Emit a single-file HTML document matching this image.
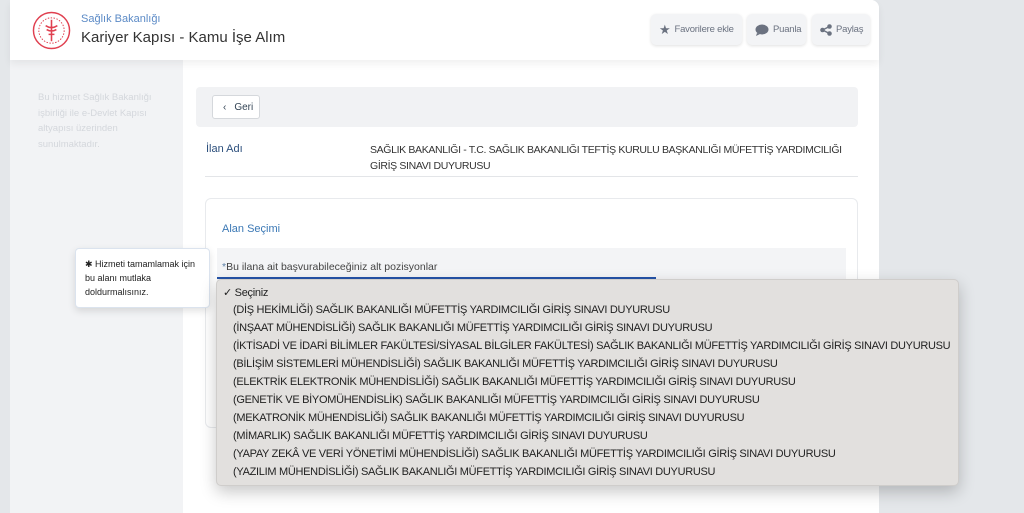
<!DOCTYPE html>
<html><head><meta charset="utf-8"><style>
*{margin:0;padding:0;box-sizing:border-box}
body{width:1024px;height:513px;overflow:hidden;background:#e4e7ea;font-family:"Liberation Sans",sans-serif;position:relative}
.abs{position:absolute}
.main{left:10px;top:0;width:869px;height:513px;background:#fff;border-radius:0 8px 0 0}
.hdr{left:10px;top:0;width:869px;height:60px;background:#fff;box-shadow:0 4px 8px rgba(0,0,0,.06);border-radius:0 8px 0 0}
.side{left:10px;top:60px;width:173px;height:453px;background:#f2f3f5}
.btn{top:14px;height:31px;background:#f3f4f6;border-radius:5px;box-shadow:0 1px 3px rgba(0,0,0,.12);font-size:9.5px;letter-spacing:-.2px;color:#6b7280;display:flex;align-items:center;padding-left:8px;gap:4px;white-space:nowrap}
.opt{left:233px;font-size:11px;letter-spacing:-.3px;color:#222;white-space:nowrap}
</style></head><body>
<div class="abs main"></div>
<div class="abs side"></div>
<div class="abs hdr"></div>
<svg class="abs" style="left:32px;top:11px" width="39" height="39" viewBox="0 0 40 40"><circle cx="20" cy="20" r="18.5" fill="none" stroke="#e04050" stroke-width="1.5"/><circle cx="20" cy="20" r="13" fill="none" stroke="#e04050" stroke-width="1" stroke-dasharray="1.5 1.5"/><path d="M20 9v22M14 15q6 4 12 0M15 19q5 3 10 0M17 24h6" stroke="#e04050" stroke-width="1.6" fill="none"/></svg>
<div class="abs" style="left:81px;top:13px;font-size:11px;color:#5b8ac6">Sağlık Bakanlığı</div>
<div class="abs" style="left:81px;top:29px;font-size:15px;color:#333">Kariyer Kapısı - Kamu İşe Alım</div>
<div class="abs btn" style="left:651px;width:91px"><span style="font-size:13px;color:#6b7280">★</span>Favorilere ekle</div>
<div class="abs btn" style="left:747px;width:59px"><svg width="14" height="12" viewBox="0 0 14 12"><ellipse cx="7" cy="5.5" rx="6.5" ry="5" fill="#6b7280"/><path d="M2 9l-1 3 4-2z" fill="#6b7280"/></svg>Puanla</div>
<div class="abs btn" style="left:812px;width:58px"><svg width="12" height="12" viewBox="0 0 12 12"><circle cx="2.5" cy="6" r="2.3" fill="#6b7280"/><circle cx="9.5" cy="2.5" r="2.3" fill="#6b7280"/><circle cx="9.5" cy="9.5" r="2.3" fill="#6b7280"/><path d="M2.5 6L9.5 2.5M2.5 6l7 3.5" stroke="#6b7280" stroke-width="1.3"/></svg>Paylaş</div>
<div class="abs" style="left:38px;top:90px;width:120px;font-size:9.5px;line-height:15.5px;color:#d4d7dc">Bu hizmet Sağlık Bakanlığı işbirliği ile e-Devlet Kapısı altyapısı üzerinden sunulmaktadır.</div>
<div class="abs" style="left:196px;top:87px;width:662px;height:40px;background:#f1f2f4;border-radius:4px"></div>
<div class="abs" style="left:212px;top:95px;width:48px;height:24px;background:#fff;border:1px solid #d5d8dc;border-radius:3px;font-size:10px;color:#345;display:flex;align-items:center;padding-left:10px;gap:8px"><span style="font-size:10px">‹</span>Geri</div>
<div class="abs" style="left:206px;top:143px;font-size:11px;color:#2c4f7c">İlan Adı</div>
<div class="abs" style="left:370px;top:142px;width:485px;font-size:10.5px;letter-spacing:-.35px;line-height:16px;color:#333">SAĞLIK BAKANLIĞI - T.C. SAĞLIK BAKANLIĞI TEFTİŞ KURULU BAŞKANLIĞI MÜFETTİŞ YARDIMCILIĞI GİRİŞ SINAVI DUYURUSU</div>
<div class="abs" style="left:205px;top:176px;width:653px;height:1px;background:#e3e5e8"></div>
<div class="abs" style="left:205px;top:198px;width:653px;height:230px;border:1px solid #e8eaed;border-radius:6px;background:#fff"></div>
<div class="abs" style="left:222px;top:223px;font-size:11px;color:#3b78b5">Alan Seçimi</div>
<div class="abs" style="left:217px;top:248px;width:629px;height:44px;background:#f3f4f6"></div>
<div class="abs" style="left:222px;top:261px;font-size:10.5px;color:#444"><span style="color:#5b7fa6">*</span>Bu ilana ait başvurabileceğiniz alt pozisyonlar</div>
<div class="abs" style="left:217px;top:277px;width:439px;height:2px;background:#2553a8"></div>
<div class="abs" style="left:75px;top:248px;width:135px;height:60px;background:#fff;border:1px solid #dbe3ee;border-radius:4px;box-shadow:0 3px 8px rgba(0,0,0,.12);font-size:9px;line-height:14px;color:#222;padding:8px 9px">✱ Hizmeti tamamlamak için bu alanı mutlaka doldurmalısınız.</div>
<div class="abs" style="left:216px;top:279px;width:743px;height:207px;background:#e2e0de;border:1px solid #cfcdcb;border-radius:5px;box-shadow:0 6px 16px rgba(0,0,0,.22)"></div>
<div class="abs opt" style="left:223px;top:286px">✓ Seçiniz</div>
<div class="abs opt" style="top:304px">(DİŞ HEKİMLİĞİ) SAĞLIK BAKANLIĞI MÜFETTİŞ YARDIMCILIĞI GİRİŞ SINAVI DUYURUSU</div>
<div class="abs opt" style="top:322px">(İNŞAAT MÜHENDİSLİĞİ) SAĞLIK BAKANLIĞI MÜFETTİŞ YARDIMCILIĞI GİRİŞ SINAVI DUYURUSU</div>
<div class="abs opt" style="top:340px">(İKTİSADİ VE İDARİ BİLİMLER FAKÜLTESİ/SİYASAL BİLGİLER FAKÜLTESİ) SAĞLIK BAKANLIĞI MÜFETTİŞ YARDIMCILIĞI GİRİŞ SINAVI DUYURUSU</div>
<div class="abs opt" style="top:358px">(BİLİŞİM SİSTEMLERİ MÜHENDİSLİĞİ) SAĞLIK BAKANLIĞI MÜFETTİŞ YARDIMCILIĞI GİRİŞ SINAVI DUYURUSU</div>
<div class="abs opt" style="top:376px">(ELEKTRİK ELEKTRONİK MÜHENDİSLİĞİ) SAĞLIK BAKANLIĞI MÜFETTİŞ YARDIMCILIĞI GİRİŞ SINAVI DUYURUSU</div>
<div class="abs opt" style="top:394px">(GENETİK VE BİYOMÜHENDİSLİK) SAĞLIK BAKANLIĞI MÜFETTİŞ YARDIMCILIĞI GİRİŞ SINAVI DUYURUSU</div>
<div class="abs opt" style="top:412px">(MEKATRONİK MÜHENDİSLİĞİ) SAĞLIK BAKANLIĞI MÜFETTİŞ YARDIMCILIĞI GİRİŞ SINAVI DUYURUSU</div>
<div class="abs opt" style="top:430px">(MİMARLIK) SAĞLIK BAKANLIĞI MÜFETTİŞ YARDIMCILIĞI GİRİŞ SINAVI DUYURUSU</div>
<div class="abs opt" style="top:448px">(YAPAY ZEKÂ VE VERİ YÖNETİMİ MÜHENDİSLİĞİ) SAĞLIK BAKANLIĞI MÜFETTİŞ YARDIMCILIĞI GİRİŞ SINAVI DUYURUSU</div>
<div class="abs opt" style="top:466px">(YAZILIM MÜHENDİSLİĞİ) SAĞLIK BAKANLIĞI MÜFETTİŞ YARDIMCILIĞI GİRİŞ SINAVI DUYURUSU</div>
</body></html>
